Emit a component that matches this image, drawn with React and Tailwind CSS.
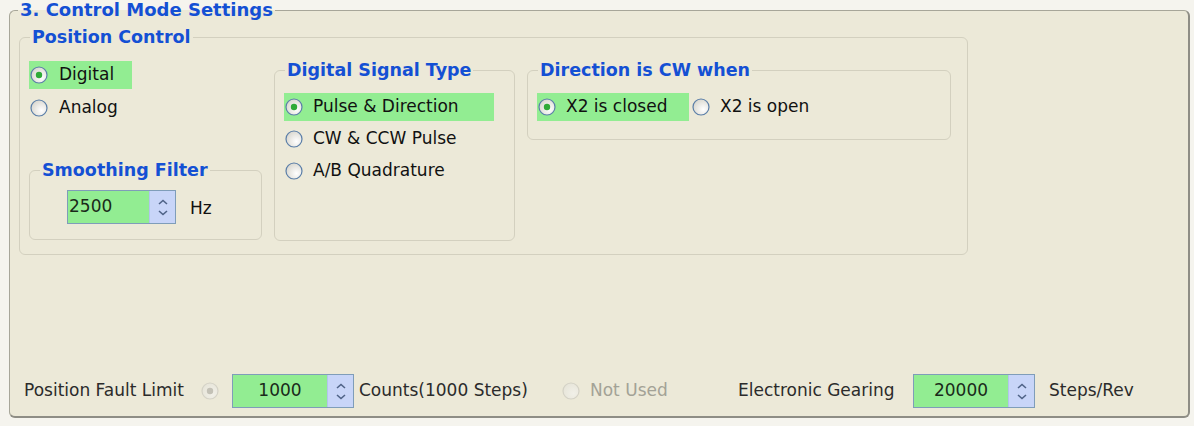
import { useId } from 'react';

function Radio({ checked = false, disabled = false }) {
  const id = useId();
  return (
    <svg width="18" height="18" viewBox="0 0 18 18" className="shrink-0">
      <defs>
        <radialGradient id={id} cx="65%" cy="65%" r="75%">
          <stop offset="0%" stopColor={disabled ? '#f1f0e8' : '#ffffff'} />
          <stop offset="100%" stopColor={disabled ? '#e6e4d8' : '#d6d4cb'} />
        </radialGradient>
      </defs>
      <circle cx="9" cy="9" r="8" fill={`url(#${id})`} stroke={disabled ? '#d4d2c6' : '#5a7ea8'} strokeWidth="1.2" />
      {checked && <circle cx="9" cy="9" r="3.2" fill={disabled ? '#c3c1b6' : '#2faa37'} />}
    </svg>
  );
}

function Spinner() {
  return (
    <div className="w-[26px] h-full bg-[#c8d5f8] border-l border-[#b3c3ee] flex flex-col items-center justify-center gap-[5px]">
      <svg width="10" height="6" viewBox="0 0 10 6">
        <path d="M1 5 L5 1.5 L9 5" fill="none" stroke="#4f6387" strokeWidth="1.6" />
      </svg>
      <svg width="10" height="6" viewBox="0 0 10 6">
        <path d="M1 1 L5 4.5 L9 1" fill="none" stroke="#4f6387" strokeWidth="1.6" />
      </svg>
    </div>
  );
}

function SpinBox({ value, width, center = false }) {
  return (
    <div className="flex h-[34px] border border-[#7f9db9] shrink-0" style={{ width }}>
      <div className={`flex-1 bg-[#92ed92] flex items-center text-[#1a2a1a] ${center ? 'justify-center' : 'pl-[1px]'}`}>
        {value}
      </div>
      <Spinner />
    </div>
  );
}

function Option({ label, checked, highlight, width, gap = 'gap-[10px]' }) {
  return (
    <div
      className={`flex items-center h-[28px] pl-[1px] ${gap} ${highlight ? 'bg-[#92ed92]' : ''}`}
      style={width ? { width } : undefined}
    >
      <Radio checked={checked} />
      <span className="whitespace-nowrap">{label}</span>
    </div>
  );
}

function Group({ title, className = '', bodyClass = '', children }) {
  return (
    <fieldset className={`border border-[#d3d0bf] rounded-[6px] ${className}`}>
      <legend className="ml-[10px] px-[2px] leading-[20px] font-bold text-[#1450d4] text-[17.5px] whitespace-nowrap">
        {title}
      </legend>
      <div className={bodyClass}>{children}</div>
    </fieldset>
  );
}

export default function App() {
  return (
    <div
      className="min-h-screen bg-[#f5f4ee] text-[17px] text-[#111] pl-[9px]"
      style={{ fontFamily: '"DejaVu Sans", Verdana, sans-serif' }}
    >
      <fieldset className="w-[1181px] bg-[#ece9d8] rounded-[6px] border border-[#a7a699] border-r-2 border-b-2 border-r-[#8e8d85] border-b-[#8e8d85]">
        <legend className="ml-[8px] px-[2px] leading-[20px] font-bold text-[#1450d4] text-[18px] whitespace-nowrap">
          3. Control Mode Settings
        </legend>

        <div className="h-[396px] flex flex-col justify-between pt-[7px] pb-[8px]">
          {/* Position Control */}
          <Group title="Position Control" className="ml-[9px] w-[949px]" bodyClass="pl-[9px] pb-[13px]">
            <div className="flex items-start gap-[12px] mt-[13px]">
              {/* Column 1 */}
              <div className="w-[233px] flex flex-col">
                <div className="mt-[1px] flex flex-col gap-[5px]">
                  <Option label="Digital" checked highlight width={103} gap="gap-[11px]" />
                  <Option label="Analog" gap="gap-[11px]" />
                </div>
                <Group title="Smoothing Filter" className="mt-[38px] w-[233px]" bodyClass="pb-[15px]">
                  <div className="flex items-center mt-[10px] pl-[37px] gap-[14px]">
                    <SpinBox value="2500" width={109} />
                    <span className="pt-[4px]">Hz</span>
                  </div>
                </Group>
              </div>

              {/* Column 2 */}
              <Group title="Digital Signal Type" className="w-[241px]" bodyClass="pl-[9px] pb-[55px]">
                <div className="mt-[13px] flex flex-col gap-[4px]">
                  <Option label="Pulse & Direction" checked highlight width={210} />
                  <Option label="CW & CCW Pulse" />
                  <Option label="A/B Quadrature" />
                </div>
              </Group>

              {/* Column 3 */}
              <Group title="Direction is CW when" className="w-[424px]" bodyClass="pl-[9px] pb-[18px]">
                <div className="mt-[13px] flex items-center">
                  <Option label="X2 is closed" checked highlight width={152} />
                  <div className="ml-[2px]">
                    <Option label="X2 is open" />
                  </div>
                </div>
              </Group>
            </div>
          </Group>

          {/* Bottom row */}
          <div className="flex items-center h-[34px] pl-[14px]">
            <span className="w-[177px] whitespace-nowrap text-[#2b2b2b]">Position Fault Limit</span>
            <Radio checked disabled />
            <div className="ml-[13px]">
              <SpinBox value="1000" width={122} center />
            </div>
            <span className="ml-[5px] w-[203px] whitespace-nowrap text-[#2b2b2b]">Counts(1000 Steps)</span>
            <Radio disabled />
            <span className="ml-[10px] w-[148px] whitespace-nowrap text-[#a3a296]">Not Used</span>
            <span className="w-[175px] whitespace-nowrap text-[#2b2b2b]">Electronic Gearing</span>
            <SpinBox value="20000" width={122} center />
            <span className="ml-[14px] whitespace-nowrap text-[#2b2b2b]">Steps/Rev</span>
          </div>
        </div>
      </fieldset>
    </div>
  );
}
